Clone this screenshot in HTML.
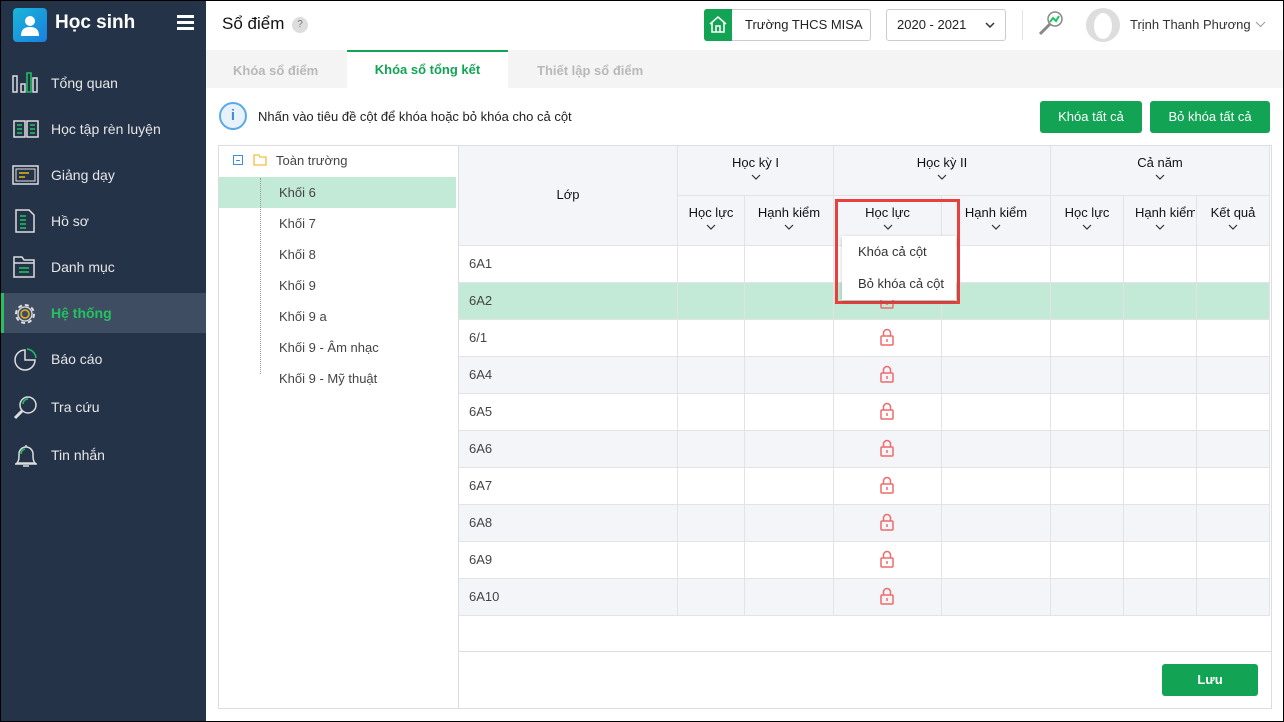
<!DOCTYPE html><html><head><meta charset="utf-8"><style>
*{box-sizing:border-box;margin:0;padding:0}
body{width:1284px;height:722px;overflow:hidden;font-family:"Liberation Sans",sans-serif;font-size:13px;color:#222;position:relative;background:#fff}
.a{position:absolute}
#sb{left:0;top:0;width:206px;height:722px;background:#253349}
.mi{position:absolute;left:0;width:206px;height:40px;color:#e6e6e6;font-size:14px;line-height:40px;padding-left:51px}
.mi svg{position:absolute;left:12px;top:8px}
.btn{background:#12a454;color:#fff;border-radius:3px;text-align:center;font-size:13px}
.cell{position:absolute;border-right:1px solid #e3e3e3;border-bottom:1px solid #e3e3e3}
.hd{background:#f4f5f9;text-align:center;font-size:13px;color:#111}
.chev{display:block;margin:4px auto 0;width:10px;height:6px}
.tr{position:absolute;left:279px;font-size:13px;color:#444}
</style></head><body>
<div id="sb" class="a">
 <div class="a" style="left:13px;top:8px;width:34px;height:34px;border-radius:4px;background:linear-gradient(135deg,#1ab6d8,#1a7fe0)">
  <svg width="34" height="34"><circle cx="17" cy="13" r="5" fill="#fff"/><path d="M8 28c0-7 4-9 9-9s9 2 9 9z" fill="#fff"/></svg></div>
 <div class="a" style="left:55px;top:12px;color:#fff;font-size:19px;font-weight:bold">Học sinh</div>
 <div class="a" style="left:177px;top:15px;width:17px;height:3px;background:#fff;box-shadow:0 6px 0 #fff,0 12px 0 #fff"></div>
 <div class="mi" style="top:63px"><svg width="28" height="24"><g fill="none" stroke="#ddd" stroke-width="1.5"><rect x="1" y="5" width="4" height="16"/><rect x="9" y="13" width="4" height="8"/><rect x="21" y="7" width="4" height="14"/></g><rect x="15" y="2" width="4" height="19" fill="none" stroke="#1ec460" stroke-width="1.5"/></svg>Tổng quan</div>
 <div class="mi" style="top:109px"><svg width="28" height="24"><path d="M2 4h11v16H2zM15 4h11v16H15z" fill="none" stroke="#ddd" stroke-width="1.5"/><path d="M5 8h5M5 12h5M5 16h5M18 8h5M18 12h5M18 16h5" stroke="#1ec460" stroke-width="1.5"/></svg>Học tập rèn luyện</div>
 <div class="mi" style="top:155px"><svg width="28" height="24"><rect x="1" y="3" width="25" height="18" fill="none" stroke="#ddd" stroke-width="1.5"/><rect x="4" y="6" width="19" height="12" fill="none" stroke="#ddd"/><path d="M7 10h10M7 14h6" stroke="#e8b21c" stroke-width="1.5"/></svg>Giảng dạy</div>
 <div class="mi" style="top:201px"><svg width="28" height="24"><path d="M4 1h13l5 5v17H4z" fill="none" stroke="#ddd" stroke-width="1.5"/><path d="M8 7h6M8 11h6M8 15h6M8 19h6" stroke="#1ec460" stroke-width="1.5"/></svg>Hồ sơ</div>
 <div class="mi" style="top:247px"><svg width="28" height="24"><path d="M2 2h8l2 3h10v17H2z M2 8h20" fill="none" stroke="#ddd" stroke-width="1.5"/><path d="M7 13h10M7 17h10" stroke="#1ec460" stroke-width="1.5"/></svg>Danh mục</div>
 <div class="mi" style="top:293px;background:#3f4d63;color:#22c35e;font-weight:bold"><div class="a" style="left:0;top:0;width:4px;height:40px;background:#22c35e"></div><svg width="28" height="26"><circle cx="13" cy="13" r="9" fill="none" stroke="#ddd" stroke-width="2" stroke-dasharray="4 3"/><circle cx="13" cy="13" r="7" fill="none" stroke="#ddd" stroke-width="1.3"/><circle cx="13" cy="13" r="4" fill="none" stroke="#e8b21c" stroke-width="1.5"/></svg>Hệ thống</div>
 <div class="mi" style="top:339px"><svg width="28" height="26"><path d="M13 3a10 10 0 1 0 10 10H13z" fill="none" stroke="#ddd" stroke-width="1.5"/><path d="M15 2a10 10 0 0 1 9 9" fill="none" stroke="#1ec460" stroke-width="1.5"/></svg>Báo cáo</div>
 <div class="mi" style="top:387px"><svg width="28" height="26"><circle cx="16" cy="10" r="8" fill="none" stroke="#ddd" stroke-width="1.5"/><path d="M11 9a5 5 0 0 1 5-5" fill="none" stroke="#1ec460" stroke-width="1.5"/><path d="M10 16l-7 7" stroke="#ddd" stroke-width="3"/></svg>Tra cứu</div>
 <div class="mi" style="top:435px"><svg width="28" height="26"><path d="M5 20c2-2 2-5 2-9a7 7 0 0 1 14 0c0 4 0 7 2 9z M3 21h22M11 23h6M14 2v2" fill="none" stroke="#ddd" stroke-width="1.5"/><path d="M9 11a5 5 0 0 1 4-5" fill="none" stroke="#1ec460" stroke-width="1.5"/></svg>Tin nhắn</div>
</div>
<div class="a" style="left:222px;top:14px;font-size:17px;color:#111">Sổ điểm</div>
<div class="a" style="left:292px;top:17px;width:16px;height:16px;border-radius:50%;background:#ddd;color:#777;font-size:10px;text-align:center;line-height:16px">?</div>
<div class="a" style="left:704px;top:9px;width:167px;height:32px;border:1px solid #ccc;border-radius:3px"></div>
<div class="a" style="left:704px;top:9px;width:28px;height:32px;background:#12a454;border-radius:3px 0 0 3px"><svg width="28" height="32"><path d="M6 15l8-7 8 7M8 13v10h12V13M12 23v-6h4v6" fill="none" stroke="#fff" stroke-width="1.5"/></svg></div>
<div class="a" style="left:745px;top:17px;font-size:13px">Trường THCS MISA</div>
<div class="a" style="left:886px;top:9px;width:120px;height:32px;border:1px solid #ccc;border-radius:3px;padding:7px 10px;font-size:13px">2020 - 2021<svg class="a" style="left:98px;top:12px" width="10" height="6"><path d="M1 1l4 4 4-4" fill="none" stroke="#333" stroke-width="1.5"/></svg></div>
<div class="a" style="left:1022px;top:10px;width:1px;height:30px;background:#e3e3e3"></div>
<svg class="a" style="left:1037px;top:8px" width="30" height="30"><circle cx="18" cy="11" r="7" fill="#fff" stroke="#888" stroke-width="1.5"/><path d="M13 14l3-4 3 3 3-5" fill="none" stroke="#1ec460" stroke-width="2"/><path d="M13 16l-10 10" stroke="#888" stroke-width="3"/></svg>
<div class="a" style="left:1086px;top:8px;width:34px;height:34px;border-radius:50%;background:#ddd"><div class="a" style="left:8px;top:5px;width:18px;height:26px;border-radius:50%;background:#fff"></div></div>
<div class="a" style="left:1130px;top:17px;font-size:13px;color:#333">Trịnh Thanh Phương</div>
<svg class="a" style="left:1255px;top:21px" width="11" height="7"><path d="M1 1l4.5 4.5L10 1" fill="none" stroke="#999"/></svg>
<div class="a" style="left:206px;top:50px;width:1078px;height:38px;background:#f4f4f4"></div>
<div class="a" style="left:233px;top:63px;color:#b8b8b8;font-weight:bold">Khóa sổ điểm</div>
<div class="a" style="left:347px;top:50px;width:161px;height:38px;background:#fff;border-top:2px solid #12a454;color:#12a454;font-weight:bold;text-align:center;line-height:36px">Khóa sổ tổng kết</div>
<div class="a" style="left:537px;top:63px;color:#b8b8b8;font-weight:bold">Thiết lập sổ điểm</div>
<div class="a" style="left:219px;top:102px;width:28px;height:28px;border-radius:50%;border:2px solid #5aaae8;background:#e7f2fc;color:#3c8fd8;text-align:center;font-weight:bold;line-height:24px;font-size:15px">i</div>
<div class="a" style="left:258px;top:109px;font-size:13px">Nhấn vào tiêu đề cột để khóa hoặc bỏ khóa cho cả cột</div>
<div class="a btn" style="left:1040px;top:101px;width:102px;height:32px;line-height:32px">Khóa tất cả</div>
<div class="a btn" style="left:1150px;top:101px;width:120px;height:32px;line-height:32px">Bỏ khóa tất cả</div>
<div class="a" style="left:218px;top:145px;width:1054px;height:564px;border:1px solid #dcdce4"></div>
<div class="a" style="left:458px;top:146px;width:1px;height:562px;background:#dcdce4"></div>
<div class="a" style="left:233px;top:155px;width:10px;height:10px;border:1px solid #3c8fd8"><div class="a" style="left:2px;top:3.5px;width:4px;height:1px;background:#3c8fd8"></div></div>
<svg class="a" style="left:253px;top:153px" width="14" height="13"><path d="M1 2h5l1 2h6v8H1z" fill="none" stroke="#f0c040" stroke-width="1.3"/></svg>
<div class="a" style="left:276px;top:153px;color:#444">Toàn trường</div>
<div class="a" style="left:219px;top:177px;width:237px;height:31px;background:#c2ead7"></div>
<div class="a" style="left:260px;top:178px;width:1px;height:196px;border-left:1px dotted #999"></div>
<div class="tr" style="top:185px">Khối 6</div><div class="tr" style="top:216px">Khối 7</div><div class="tr" style="top:247px">Khối 8</div><div class="tr" style="top:278px">Khối 9</div><div class="tr" style="top:309px">Khối 9 a</div><div class="tr" style="top:340px">Khối 9 - Âm nhạc</div><div class="tr" style="top:371px">Khối 9 - Mỹ thuật</div>
<div class="a hd" style="left:459px;top:146px;width:811px;height:100px;border-bottom:2px solid #e3e3e3"></div>
<div class="cell hd" style="left:459px;top:146px;width:219px;height:100px;padding-top:41px">Lớp</div>
<div class="cell hd" style="left:678px;top:146px;width:156px;height:50px;padding-top:9px">Học kỳ I<svg class="chev"><path d="M1 1l4 4 4-4" fill="none" stroke="#333" stroke-width="1.2"/></svg></div>
<div class="cell hd" style="left:834px;top:146px;width:217px;height:50px;padding-top:9px">Học kỳ II<svg class="chev"><path d="M1 1l4 4 4-4" fill="none" stroke="#333" stroke-width="1.2"/></svg></div>
<div class="cell hd" style="left:1051px;top:146px;width:219px;height:50px;padding-top:9px">Cả năm<svg class="chev"><path d="M1 1l4 4 4-4" fill="none" stroke="#333" stroke-width="1.2"/></svg></div>
<div class="cell hd" style="left:678px;top:196px;width:67px;height:50px;padding-top:9px">Học lực<svg class="chev"><path d="M1 1l4 4 4-4" fill="none" stroke="#333" stroke-width="1.2"/></svg></div>
<div class="cell hd" style="left:745px;top:196px;width:89px;height:50px;padding-top:9px">Hạnh kiểm<svg class="chev"><path d="M1 1l4 4 4-4" fill="none" stroke="#333" stroke-width="1.2"/></svg></div>
<div class="cell hd" style="left:834px;top:196px;width:108px;height:50px;padding-top:9px">Học lực<svg class="chev"><path d="M1 1l4 4 4-4" fill="none" stroke="#333" stroke-width="1.2"/></svg></div>
<div class="cell hd" style="left:942px;top:196px;width:109px;height:50px;padding-top:9px">Hạnh kiểm<svg class="chev"><path d="M1 1l4 4 4-4" fill="none" stroke="#333" stroke-width="1.2"/></svg></div>
<div class="cell hd" style="left:1051px;top:196px;width:73px;height:50px;padding-top:9px">Học lực<svg class="chev"><path d="M1 1l4 4 4-4" fill="none" stroke="#333" stroke-width="1.2"/></svg></div>
<div class="cell hd" style="left:1124px;top:196px;width:73px;height:50px;padding-top:9px;white-space:nowrap;overflow:hidden"><div style="width:60px;overflow:hidden;margin-left:11px;text-align:left">Hạnh kiểm</div><svg class="chev"><path d="M1 1l4 4 4-4" fill="none" stroke="#333" stroke-width="1.2"/></svg></div>
<div class="cell hd" style="left:1197px;top:196px;width:73px;height:50px;padding-top:9px">Kết quả<svg class="chev"><path d="M1 1l4 4 4-4" fill="none" stroke="#333" stroke-width="1.2"/></svg></div>
<div id="rows"></div>
<div class="a" style="left:459px;top:651px;width:812px;height:1px;background:#dcdce4"></div>
<div class="a btn" style="left:1162px;top:664px;width:96px;height:32px;line-height:32px;font-weight:bold">Lưu</div>
<div class="a" style="left:835px;top:199px;width:125px;height:105px;border:3px solid #e8403f"></div>
<div class="a" style="left:842px;top:236px;width:114px;height:64px;background:#fff;box-shadow:0 1px 4px rgba(0,0,0,.2);font-size:13px;color:#333"><div style="position:absolute;left:16px;top:8px">Khóa cả cột</div><div style="position:absolute;left:16px;top:40px">Bỏ khóa cả cột</div></div>
<div class="a" style="left:0;top:0;width:1284px;height:722px;border:1px solid #000;pointer-events:none"></div>
<script>
var names=["6A1","6A2","6/1","6A4","6A5","6A6","6A7","6A8","6A9","6A10"],cols=[[459,219],[678,67],[745,89],[834,108],[942,109],[1051,73],[1124,73],[1197,73]],h="";
names.forEach(function(n,i){var t=246+i*37,bg=i==1?"#c2ead7":(i%2==1?"#f4f5f9":"#fff");
cols.forEach(function(c,j){h+='<div class="cell" style="left:'+c[0]+'px;top:'+t+'px;width:'+c[1]+'px;height:37px;background:'+bg+';padding:10px 10px;color:#444">'+(j==0?n:'')+'</div>';});
if(i>0)h+='<svg class="a" style="left:879px;top:'+(t+7)+'px" width="16" height="20"><path d="M4.5 9V6a3.5 3.5 0 0 1 7 0v3" fill="none" stroke="#f06a6a" stroke-width="1.5"/><rect x="2" y="9" width="12" height="9" rx="1" fill="none" stroke="#f06a6a" stroke-width="1.5"/><path d="M8 12v3" stroke="#f06a6a" stroke-width="1.5"/></svg>';});
document.getElementById("rows").outerHTML=h;
</script>
</body></html>
